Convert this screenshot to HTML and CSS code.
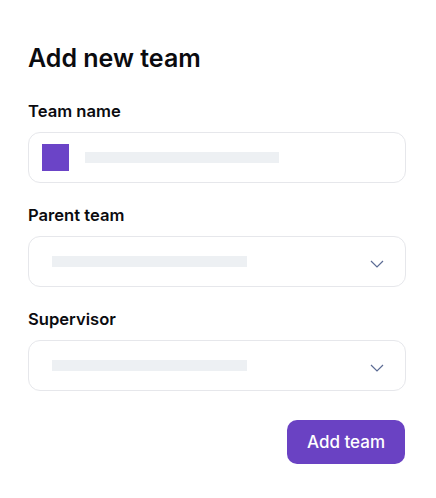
FILE: index.html
```html
<!DOCTYPE html>
<html lang="en">
<head>
<meta charset="utf-8">
<title>Add new team</title>
<link rel="stylesheet" href="styles.css">
</head>
<body>
<form class="form">
  <h1 class="title">Add new team</h1>
  <div class="field">
    <label class="label">Team name</label>
    <div class="box box-name">
      <span class="swatch"></span>
      <span class="bar"></span>
    </div>
  </div>
  <div class="field">
    <label class="label">Parent team</label>
    <div class="box box-select">
      <span class="bar"></span>
      <svg class="chevron" width="14" height="8" viewBox="0 0 14 8"><path d="M1 1l6 6 6-6" fill="none" stroke="#5b6b94" stroke-width="1.2"/></svg>
    </div>
  </div>
  <div class="field">
    <label class="label">Supervisor</label>
    <div class="box box-select">
      <span class="bar"></span>
      <svg class="chevron" width="14" height="8" viewBox="0 0 14 8"><path d="M1 1l6 6 6-6" fill="none" stroke="#5b6b94" stroke-width="1.2"/></svg>
    </div>
  </div>
  <div class="actions">
    <button type="button" class="btn">Add team</button>
  </div>
</form>
</body>
</html>
```
FILE: styles.css
```css
html, body {
  margin: 0;
  background: #ffffff;
  font-family: Inter, "Noto Sans", sans-serif;
  color: #0b0b0f;
}
.form {
  width: 378px;
  padding: 42px 0 0 28px;
}
.title {
  margin: 0 0 25px;
  font-size: 25px;
  line-height: 32px;
  font-weight: 600;
}
.field {
  margin-bottom: 20px;
}
.label {
  display: block;
  font-size: 16.6px;
  line-height: 24px;
  font-weight: 600;
  margin-bottom: 9px;
}
.box {
  box-sizing: border-box;
  height: 51px;
  border: 1px solid #e6e7eb;
  border-radius: 12px;
  display: flex;
  align-items: center;
}
.box-name {
  padding-left: 13px;
}
.swatch {
  width: 27px;
  height: 27px;
  background: #6b44c7;
  margin-right: 16px;
}
.bar {
  width: 194px;
  height: 11px;
  background: #edf0f3;
}
.box-select {
  padding: 0 21px 0 23px;
  justify-content: space-between;
}
.box-select .bar {
  width: 195px;
}
.chevron {
  margin-top: 5px;
}
.actions {
  display: flex;
  justify-content: flex-end;
  padding-top: 9px;
}
.btn {
  width: 118px;
  height: 44px;
  margin-right: 1px;
  border: none;
  border-radius: 10px;
  background: #6a42c3;
  color: #ffffff;
  font-family: Inter, "Noto Sans", sans-serif;
  font-size: 17px;
  font-weight: 500;
}
```
